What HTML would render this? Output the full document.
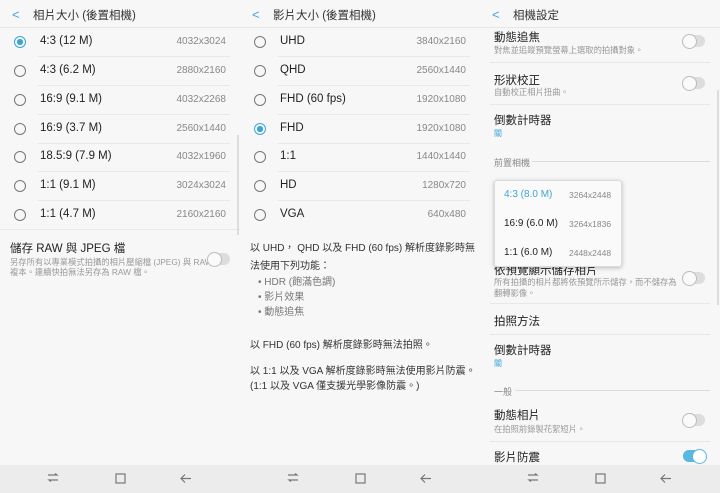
<!DOCTYPE html>
<html><head><meta charset="utf-8"><style>
*{margin:0;padding:0;box-sizing:border-box}
body{width:720px;height:493px;background:#f6f6f6;font-family:"Liberation Sans","Noto Sans CJK TC",sans-serif;color:#222;position:relative;overflow:hidden}
.p{position:absolute;top:0;width:240px;height:493px;background:#f7f7f7}
.a{position:absolute;white-space:nowrap}
.hd{position:absolute;left:0;top:0;width:240px;height:28px;border-bottom:1px solid #e6e6e6}
.bk{position:absolute;left:12px;top:7px;color:#3aa5d6;font-size:13px}
.ht{position:absolute;left:33px;top:7px;font-size:11.5px;color:#333}
.lb{font-size:11.5px;color:#222}
.vl{font-size:10px;color:#888;text-align:right}
.rd{position:absolute;width:12px;height:12px;border:1.3px solid #777;border-radius:50%}
.rd.on{border-color:#3aa5d6}
.rd.on:after{content:"";position:absolute;left:2px;top:2px;width:5.5px;height:5.5px;border-radius:50%;background:#3aa5d6}
.dv{position:absolute;height:1px;background:#e8e8e8}
.tg{position:absolute;width:22px;height:12px;border-radius:6px;background:#ddd}
.tg:after{content:"";position:absolute;left:-1px;top:-1px;width:13px;height:13px;border-radius:50%;background:#fafafa;border:1px solid #bbb}
.tg.on{background:#5ab8e0}
.tg.on:after{left:9px;border-color:#5ab8e0;background:#fff}
.sb{font-size:8.3px;color:#999}
.nav{position:absolute;left:0;top:465px;width:720px;height:28px;background:#ececec}
.sec{font-size:9px;color:#888}
</style></head><body>
<div class="p" style="left:0">
<div class="hd"><span class="bk">&lt;</span><span class="ht">相片大小 (後置相機)</span></div>
<div class="rd on" style="left:14px;top:36px"></div><span class="a lb" style="left:40px;top:35px">4:3 (12 M)</span><span class="a vl" style="right:14px;top:36px">4032x3024</span><div class="dv" style="left:38px;width:192px;top:56px"></div>
<div class="rd" style="left:14px;top:65px"></div><span class="a lb" style="left:40px;top:64px">4:3 (6.2 M)</span><span class="a vl" style="right:14px;top:65px">2880x2160</span><div class="dv" style="left:38px;width:192px;top:85px"></div>
<div class="rd" style="left:14px;top:94px"></div><span class="a lb" style="left:40px;top:93px">16:9 (9.1 M)</span><span class="a vl" style="right:14px;top:94px">4032x2268</span><div class="dv" style="left:38px;width:192px;top:114px"></div>
<div class="rd" style="left:14px;top:123px"></div><span class="a lb" style="left:40px;top:122px">16:9 (3.7 M)</span><span class="a vl" style="right:14px;top:123px">2560x1440</span><div class="dv" style="left:38px;width:192px;top:143px"></div>
<div class="rd" style="left:14px;top:151px"></div><span class="a lb" style="left:40px;top:150px">18.5:9 (7.9 M)</span><span class="a vl" style="right:14px;top:151px">4032x1960</span><div class="dv" style="left:38px;width:192px;top:171px"></div>
<div class="rd" style="left:14px;top:180px"></div><span class="a lb" style="left:40px;top:179px">1:1 (9.1 M)</span><span class="a vl" style="right:14px;top:180px">3024x3024</span><div class="dv" style="left:38px;width:192px;top:200px"></div>
<div class="rd" style="left:14px;top:209px"></div><span class="a lb" style="left:40px;top:208px">1:1 (4.7 M)</span><span class="a vl" style="right:14px;top:209px">2160x2160</span><div class="dv" style="left:0;width:240px;top:229px"></div>
<span class="a lb" style="left:10px;top:240px">儲存 RAW 與 JPEG 檔</span>
<span class="a sb" style="left:10px;top:256px">另存所有以專業模式拍攝的相片壓縮檔 (JPEG) 與 RAW</span>
<span class="a sb" style="left:10px;top:266px">複本。連續快拍無法另存為 RAW 檔。</span>
<div class="tg" style="left:208px;top:253px"></div>
<div class="a" style="left:237px;top:135px;width:2px;height:100px;background:#ddd"></div>
</div>
<div class="p" style="left:240px">
<div class="hd"><span class="bk">&lt;</span><span class="ht">影片大小 (後置相機)</span></div>
<div class="rd" style="left:14px;top:36px"></div><span class="a lb" style="left:40px;top:35px">UHD</span><span class="a vl" style="right:14px;top:36px">3840x2160</span><div class="dv" style="left:38px;width:192px;top:56px"></div>
<div class="rd" style="left:14px;top:65px"></div><span class="a lb" style="left:40px;top:64px">QHD</span><span class="a vl" style="right:14px;top:65px">2560x1440</span><div class="dv" style="left:38px;width:192px;top:85px"></div>
<div class="rd" style="left:14px;top:94px"></div><span class="a lb" style="left:40px;top:93px">FHD (60 fps)</span><span class="a vl" style="right:14px;top:94px">1920x1080</span><div class="dv" style="left:38px;width:192px;top:114px"></div>
<div class="rd on" style="left:14px;top:123px"></div><span class="a lb" style="left:40px;top:122px">FHD</span><span class="a vl" style="right:14px;top:123px">1920x1080</span><div class="dv" style="left:38px;width:192px;top:143px"></div>
<div class="rd" style="left:14px;top:151px"></div><span class="a lb" style="left:40px;top:150px">1:1</span><span class="a vl" style="right:14px;top:151px">1440x1440</span><div class="dv" style="left:38px;width:192px;top:171px"></div>
<div class="rd" style="left:14px;top:180px"></div><span class="a lb" style="left:40px;top:179px">HD</span><span class="a vl" style="right:14px;top:180px">1280x720</span><div class="dv" style="left:38px;width:192px;top:200px"></div>
<div class="rd" style="left:14px;top:209px"></div><span class="a lb" style="left:40px;top:208px">VGA</span><span class="a vl" style="right:14px;top:209px">640x480</span>
<div style="position:absolute;left:10px;top:240px;font-size:10px;line-height:18px;color:#333;width:228px">以 UHD， QHD 以及 FHD (60 fps) 解析度錄影時無<br>法使用下列功能：</div>
<div style="position:absolute;left:18px;top:275px;font-size:10px;line-height:15px;color:#777">• HDR (飽滿色調)<br>• 影片效果<br>• 動態追焦</div>
<div style="position:absolute;left:10px;top:336px;font-size:10px;color:#333">以 FHD (60 fps) 解析度錄影時無法拍照。</div>
<div style="position:absolute;left:10px;top:364px;font-size:10px;line-height:15px;color:#333">以 1:1 以及 VGA 解析度錄影時無法使用影片防震。<br>(1:1 以及 VGA 僅支援光學影像防震。)</div>
</div>
<div class="p" style="left:480px">
<div class="hd"><span class="bk">&lt;</span><span class="ht">相機設定</span></div>
<span class="a lb" style="left:14px;top:29px">動態追焦</span><span class="a sb" style="left:14px;top:44px">對焦並追蹤預覽螢幕上選取的拍攝對象。</span><div class="tg" style="left:203px;top:35px"></div><div class="dv" style="left:10px;width:220px;top:62px"></div>
<span class="a lb" style="left:14px;top:72px">形狀校正</span><span class="a sb" style="left:14px;top:86px">自動校正相片扭曲。</span><div class="tg" style="left:203px;top:77px"></div><div class="dv" style="left:10px;width:220px;top:104px"></div>
<span class="a lb" style="left:14px;top:112px">倒數計時器</span><span class="a" style="left:14px;top:128px;font-size:8px;color:#3aa5d6">關</span>
<span class="a sec" style="left:14px;top:156px">前置相機</span><div class="dv" style="left:52px;width:178px;top:161px;background:#ddd"></div>
<span class="a lb" style="left:14px;top:262px">依預覽顯示儲存相片</span><span class="a sb" style="left:14px;top:276px">所有拍攝的相片都將依預覽所示儲存，而不儲存為</span><span class="a sb" style="left:14px;top:287px">翻轉影像。</span><div class="tg" style="left:203px;top:272px"></div><div class="dv" style="left:10px;width:220px;top:303px"></div>
<span class="a lb" style="left:14px;top:313px">拍照方法</span><div class="dv" style="left:10px;width:220px;top:334px"></div>
<span class="a lb" style="left:14px;top:342px">倒數計時器</span><span class="a" style="left:14px;top:358px;font-size:8px;color:#3aa5d6">關</span>
<span class="a sec" style="left:14px;top:385px">一般</span><div class="dv" style="left:35px;width:195px;top:390px;background:#ddd"></div>
<span class="a lb" style="left:14px;top:407px">動態相片</span><span class="a sb" style="left:14px;top:423px">在拍照前錄製花絮短片。</span><div class="tg" style="left:203px;top:414px"></div><div class="dv" style="left:10px;width:220px;top:441px"></div>
<span class="a lb" style="left:14px;top:449px">影片防震</span><div class="tg on" style="left:203px;top:450px"></div>
<div class="a" style="left:237px;top:90px;width:2px;height:215px;background:#ddd"></div>
<div style="position:absolute;left:14px;top:180px;width:128px;height:87px;background:#fafafa;border:1px solid #ddd;border-radius:3px;box-shadow:0 1px 4px rgba(0,0,0,.25)">
<span class="a" style="left:9px;top:8px;font-size:10px;color:#3aa5d6">4:3 (8.0 M)</span><span class="a" style="left:74px;top:9px;font-size:8.5px;color:#888">3264x2448</span>
<span class="a" style="left:9px;top:37px;font-size:10px;color:#222">16:9 (6.0 M)</span><span class="a" style="left:74px;top:38px;font-size:8.5px;color:#888">3264x1836</span>
<span class="a" style="left:9px;top:66px;font-size:10px;color:#222">1:1 (6.0 M)</span><span class="a" style="left:74px;top:67px;font-size:8.5px;color:#888">2448x2448</span>
</div>
</div>
<div class="nav">
<svg width="720" height="28" style="position:absolute;left:0;top:0" fill="none" stroke="#777" stroke-width="1.2">
<g id="n"><path d="M48 10h9l-2-1.5M58 15h-9l2 1.5"/><rect x="116" y="9" width="9" height="9"/><path d="M191 13.5h-10M185 9.5l-4 4 4 4"/></g>
<use href="#n" x="240"/><use href="#n" x="480"/>
</svg>
</div>
</body></html>
